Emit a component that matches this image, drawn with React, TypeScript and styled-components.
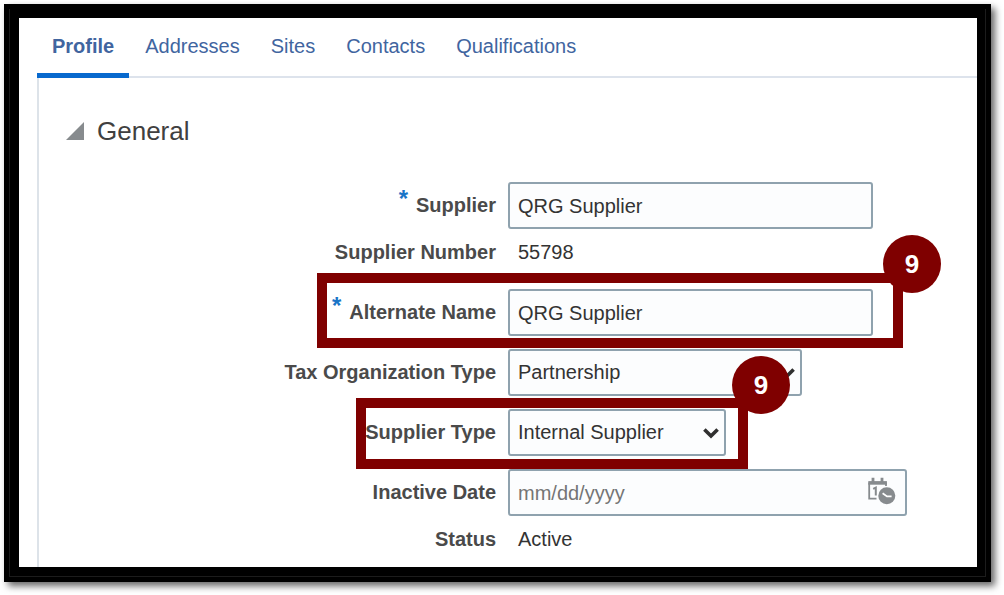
import React, { useState } from "react";
import styled, { createGlobalStyle, css } from "styled-components";

const GlobalStyle = createGlobalStyle`
  *, *::before, *::after { box-sizing: border-box; }
  body {
    margin: 0;
    background: #fff;
    color: #333;
    font: 20px/24px "Liberation Sans", Arial, sans-serif;
  }
  input, select, button { font: inherit; color: inherit; }
`;

const Frame = styled.div`
  margin: 4px 13px 13px 4px;
  border: 5px solid #000;
  padding: 9px 9px 10px 10px;
  background: #000;
  box-shadow:
    inset -1px -1px 0 #1c1c1c,
    inset 1px 0 0 #1c1c1c,
    4px 4px 7px rgba(0, 0, 0, 0.6);
`;

const Page = styled.main`
  padding-left: 18px;
  background: #fff;
  overflow: hidden;
`;

const TabBar = styled.nav`
  display: flex;
  gap: 1px;
  height: 60px;
  box-shadow: inset 0 -2px 0 #dde3ec;
`;

const Tab = styled.a<{ $active?: boolean }>`
  display: flex;
  align-items: center;
  padding: 0 15px;
  border-bottom: 5px solid ${(p) => (p.$active ? "#0869ce" : "transparent")};
  color: #41659f;
  font-weight: ${(p) => (p.$active ? 700 : 400)};
  text-decoration: none;
`;

const Panel = styled.section`
  padding: 38px 27px 4px;
  border-left: 2px solid #dde3e9;
`;

const PanelTitle = styled.h1`
  margin: 0 0 36px;
  font-size: 26px;
  line-height: 30px;
  font-weight: 400;
`;

const Disclosure = styled.button`
  display: flex;
  align-items: center;
  gap: 13px;
  padding: 0;
  border: 0;
  background: none;
  color: #404040;
  cursor: pointer;
`;

const Row = styled.div<{ $tight?: boolean }>`
  position: relative;
  display: flex;
  align-items: center;
  gap: 12px;
  width: fit-content;
  min-height: 47px;
  margin-bottom: ${(p) => (p.$tight ? 0 : 13)}px;
`;

const labelStyle = css`
  display: flex;
  justify-content: flex-end;
  gap: 8px;
  width: 430px;
  padding-bottom: 2px;
  color: #4a4a4a;
  font-weight: 700;
`;

const Label = styled.label`
  ${labelStyle}
`;

const StaticLabel = styled.span`
  ${labelStyle}
`;

const Required = styled.span`
  height: 16px;
  color: #1a75c7;
  font-size: 24px;
  line-height: 12px;
  font-weight: 700;
`;

const StaticValue = styled.span`
  padding: 0 0 2px 10px;
`;

const ControlBox = styled.span<{ $width: number }>`
  position: relative;
  display: flex;
  align-items: center;
  width: ${(p) => p.$width}px;
  height: 47px;
  border: 2px solid #8fa2ae;
  border-radius: 3px;
  background: #fcfdfe;
`;

const fieldStyle = css`
  flex: 1;
  min-width: 0;
  height: 100%;
  border: 0;
  outline: 0;
  background: transparent;
`;

const TextInput = styled.input`
  ${fieldStyle}
  padding: 2px 8px 0;
  &::placeholder { color: #757575; opacity: 1; }
`;

const SelectInput = styled.select`
  ${fieldStyle}
  padding: 0 8px 2px;
  appearance: none;
`;

const ChevronIcon = styled.svg`
  position: absolute;
  right: 5px;
  top: 16px;
  pointer-events: none;
`;

const DateButton = styled.button`
  display: flex;
  align-items: center;
  padding: 0 9px 4px;
  border: 0;
  background: none;
  cursor: pointer;
`;

const Highlight = styled.div<{ $left: number; $right: number; $top: number; $bottom: number }>`
  position: absolute;
  z-index: 1;
  left: ${(p) => p.$left}px;
  right: ${(p) => -p.$right}px;
  top: ${(p) => -p.$top}px;
  bottom: ${(p) => -p.$bottom}px;
  border: 10px solid #7f0000;
  pointer-events: none;
`;

const StepBadge = styled.span<{ $offset: number }>`
  position: absolute;
  right: ${(p) => -p.$offset}px;
  top: ${(p) => -p.$offset}px;
  display: flex;
  align-items: center;
  justify-content: center;
  width: 58px;
  height: 58px;
  border-radius: 50%;
  background: #7f0000;
  color: #fff;
  font-size: 26px;
  font-weight: 700;
`;

const tabs = ["Profile", "Addresses", "Sites", "Contacts", "Qualifications"];

function Select({ id, width, options }: { id: string; width: number; options: string[] }) {
  return (
    <ControlBox $width={width}>
      <SelectInput id={id} defaultValue={options[0]}>
        {options.map((o) => (
          <option key={o}>{o}</option>
        ))}
      </SelectInput>
      <ChevronIcon width="16" height="12" viewBox="0 0 16 12" aria-hidden="true">
        <path d="M1.4 2.4 8 9l6.6-6.6" fill="none" stroke="#303030" strokeWidth="3.6" />
      </ChevronIcon>
    </ControlBox>
  );
}

function CalendarClockIcon() {
  return (
    <svg width="28" height="28" viewBox="0 0 28 28" aria-hidden="true">
      <g fill="none" stroke="#878b8e">
        <path d="M8.5 21.6H1.2V5.5M18 5.5v3.5" strokeWidth="1.8" />
        <path d="M.3 5.9h18.6" strokeWidth="3.6" />
        <path d="M5 .8v5M14 .8v5" strokeWidth="2.8" />
        <path d="M5.2 11.8 7.8 10.6v7.8" strokeWidth="2" />
      </g>
      <circle cx="18.8" cy="18.8" r="8.5" fill="#878b8e" />
      <path d="m14.6 16.2 4.4 3.2h4.6" fill="none" stroke="#fff" strokeWidth="1.8" />
    </svg>
  );
}

export default function App() {
  const [open, setOpen] = useState(true);
  return (
    <>
      <GlobalStyle />
      <Frame>
        <Page>
          <TabBar aria-label="Supplier sections">
            {tabs.map((t, i) => (
              <Tab key={t} href={`#${t.toLowerCase()}`} $active={i === 0} aria-current={i === 0 ? "page" : undefined}>
                {t}
              </Tab>
            ))}
          </TabBar>
          <Panel>
            <PanelTitle>
              <Disclosure type="button" aria-expanded={open} onClick={() => setOpen(!open)}>
                <svg width="18" height="18" viewBox="0 0 18 18" aria-hidden="true">
                  <path d="M18 0v18H0z" fill="#878b8e" />
                </svg>
                General
              </Disclosure>
            </PanelTitle>
            {open && (
              <form>
                <Row $tight>
                  <Label htmlFor="supplier">
                    <Required>*</Required>Supplier
                  </Label>
                  <ControlBox $width={365}>
                    <TextInput id="supplier" type="text" required defaultValue="QRG Supplier" />
                  </ControlBox>
                </Row>
                <Row>
                  <StaticLabel>Supplier Number</StaticLabel>
                  <StaticValue>55798</StaticValue>
                </Row>
                <Row>
                  <Label htmlFor="alternate-name">
                    <Required>*</Required>Alternate Name
                  </Label>
                  <ControlBox $width={365}>
                    <TextInput id="alternate-name" type="text" required defaultValue="QRG Supplier" />
                  </ControlBox>
                  <Highlight $left={251} $right={30} $top={16} $bottom={12}>
                    <StepBadge $offset={48}>9</StepBadge>
                  </Highlight>
                </Row>
                <Row>
                  <Label htmlFor="tax-type">Tax Organization Type</Label>
                  <Select id="tax-type" width={294} options={["Partnership"]} />
                </Row>
                <Row>
                  <Label htmlFor="supplier-type">Supplier Type</Label>
                  <Select id="supplier-type" width={218} options={["Internal Supplier"]} />
                  <Highlight $left={290} $right={22} $top={11} $bottom={13}>
                    <StepBadge $offset={52}>9</StepBadge>
                  </Highlight>
                </Row>
                <Row $tight>
                  <Label htmlFor="inactive-date">Inactive Date</Label>
                  <ControlBox $width={399}>
                    <TextInput id="inactive-date" type="text" placeholder="mm/dd/yyyy" />
                    <DateButton type="button" aria-label="Select date">
                      <CalendarClockIcon />
                    </DateButton>
                  </ControlBox>
                </Row>
                <Row $tight>
                  <StaticLabel>Status</StaticLabel>
                  <StaticValue>Active</StaticValue>
                </Row>
              </form>
            )}
          </Panel>
        </Page>
      </Frame>
    </>
  );
}
